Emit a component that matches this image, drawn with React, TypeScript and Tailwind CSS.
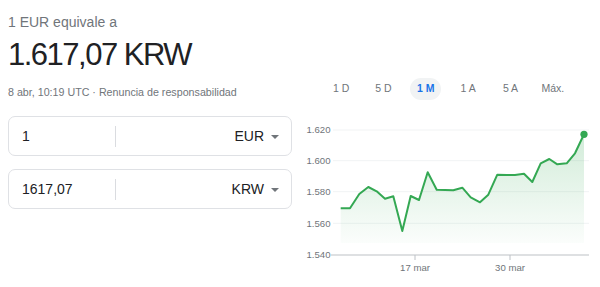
import React from "react";

const FONT = { fontFamily: '"Liberation Sans", Arial, sans-serif' };

// chart points in page coords, shifted into the svg box (x-300, y-100)
const RAW: [number, number][] = [
  [340.7, 208.3], [350, 208.3], [359.3, 194], [368.3, 187], [376.7, 191.3],
  [385, 198.7], [393.3, 196.3], [402.3, 231], [410.7, 196], [419, 200],
  [427.7, 172.3], [436.7, 189.7], [445, 190], [453.3, 190.3], [462.3, 187.7],
  [470.7, 197.3], [480, 202.3], [488.3, 194.7], [497.3, 174.7], [506.7, 175],
  [515, 175], [524, 173.7], [532.3, 182], [540.7, 163.3], [549.3, 159],
  [557.3, 164.3], [566.7, 163.3], [575, 153.3], [584, 134.3],
];
const PTS = RAW.map(([x, y]) => [x - 300, y - 100] as [number, number]);

const GRID = [
  { label: "1.620", y: 30 },
  { label: "1.600", y: 60.7 },
  { label: "1.580", y: 91.7 },
  { label: "1.560", y: 123.3 },
];

const TABS = ["1 D", "5 D", "1 M", "1 A", "5 A", "Máx."];

function CurrencyBox({ amount, code }: { amount: string; code: string }) {
  return (
    <div className="flex h-[40px] items-center rounded-[7px] border border-[#dfe1e5] bg-white">
      <div className="w-[106px] pl-[13px] text-[14px] text-[#202124]">{amount}</div>
      <div className="h-[21px] w-px bg-[#dadce0]" />
      <div className="flex flex-1 items-center justify-end pr-[12px]">
        <span className="text-[14px] text-[#202124]">{code}</span>
        <span className="ml-[7px] mt-[1px] h-0 w-0 border-x-[4px] border-t-[4px] border-x-transparent border-t-[#70757a]" />
      </div>
    </div>
  );
}

function Chart() {
  const line = PTS.map(([x, y], i) => `${i ? "L" : "M"}${x} ${y}`).join(" ");
  const first = PTS[0];
  const last = PTS[PTS.length - 1];
  const area = `${line} L${last[0]} 143 L${first[0]} 143 Z`;
  return (
    <svg width="300" height="187" viewBox="0 0 300 187" className="block">
      <defs>
        <linearGradient id="fill" x1="0" y1="0" x2="0" y2="1">
          <stop offset="0%" stopColor="#34a853" stopOpacity="0.22" />
          <stop offset="100%" stopColor="#34a853" stopOpacity="0.02" />
        </linearGradient>
      </defs>
      {GRID.map((g) => (
        <g key={g.label}>
          <line x1="33" x2="289" y1={g.y} y2={g.y} stroke="#f1f3f4" strokeWidth="1" />
          <text x="30.5" y={g.y + 3.3} textAnchor="end" fontSize="9.6" fill="#70757a" style={FONT}>
            {g.label}
          </text>
        </g>
      ))}
      <path d={area} fill="url(#fill)" />
      <path d={line} fill="none" stroke="#34a853" strokeWidth="2" strokeLinejoin="round" />
      <circle cx={last[0]} cy={last[1]} r="3.6" fill="#34a853" />
      <line x1="31" x2="289" y1="155" y2="155" stroke="#bdc1c6" strokeWidth="1.2" />
      <text x="30.5" y="158.3" textAnchor="end" fontSize="9.6" fill="#70757a" style={FONT}>
        1.540
      </text>
      {[
        { x: 115, t: "17 mar" },
        { x: 210, t: "30 mar" },
      ].map((tk) => (
        <g key={tk.t}>
          <line x1={tk.x} x2={tk.x} y1="155" y2="160" stroke="#bdc1c6" strokeWidth="1" />
          <text x={tk.x} y="170.5" textAnchor="middle" fontSize="9.6" fill="#70757a" style={FONT}>
            {tk.t}
          </text>
        </g>
      ))}
    </svg>
  );
}

export default function App() {
  return (
    <div className="flex h-[287px] w-[600px] overflow-hidden bg-white" style={FONT}>
      {/* left: headline + converter */}
      <div className="w-[292px] shrink-0 pl-[8px]">
        <div className="mt-[12px] text-[14px] leading-[20px] text-[#70757a]">1 EUR equivale a</div>
        <div className="mt-[3px] text-[31px] leading-[40px] tracking-[-1.5px] text-[#202124]">
          1.617,07 KRW
        </div>
        <div className="mt-[9px] text-[10.7px] leading-[16px] text-[#70757a]">
          8 abr, 10:19 UTC · Renuncia de responsabilidad
        </div>
        <div className="mt-[16px] space-y-[13px]">
          <CurrencyBox amount="1" code="EUR" />
          <CurrencyBox amount="1617,07" code="KRW" />
        </div>
      </div>

      {/* right: range tabs + chart */}
      <div className="flex-1 pl-[8px]">
        <div className="mt-[78px] ml-[20px] grid h-[22px] w-[254px] grid-cols-6">
          {TABS.map((t) => (
            <div key={t} className="flex items-center justify-center">
              {t === "1 M" ? (
                <span className="flex h-[22px] w-[31px] items-center justify-center rounded-full bg-[#f1f3f4] text-[10.5px] font-semibold text-[#1a73e8]">
                  {t}
                </span>
              ) : (
                <span className="text-[10.5px] text-[#70757a]">{t}</span>
              )}
            </div>
          ))}
        </div>
        <Chart />
      </div>
    </div>
  );
}
